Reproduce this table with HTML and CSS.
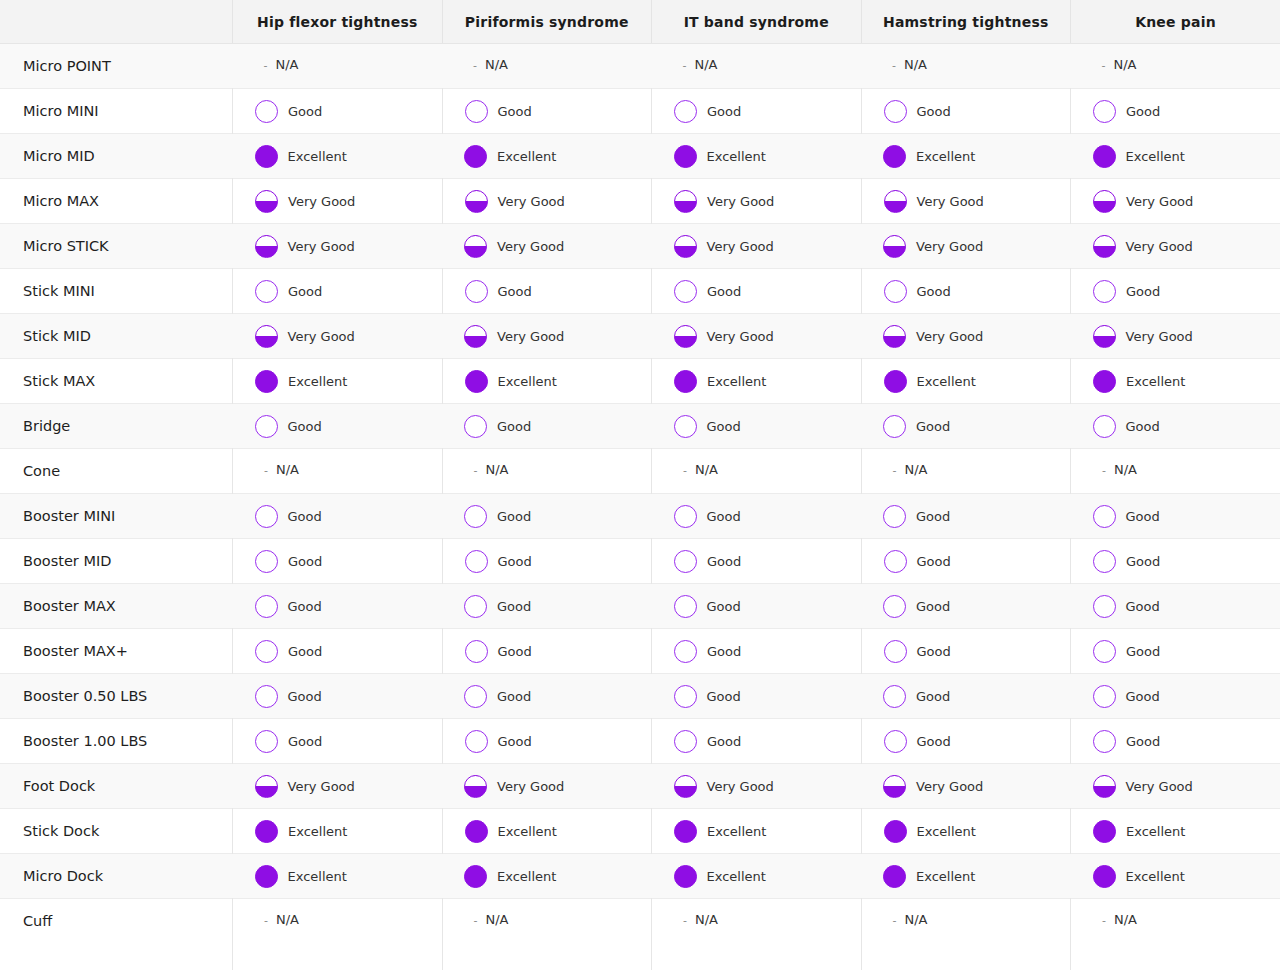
FILE: index.html
```html
<!DOCTYPE html>
<html lang="en">
<head>
    <meta charset="UTF-8">
    <meta name="viewport" content="width=device-width, initial-scale=1.0">
    <title>Product Comparison</title>
    <link rel="stylesheet" href="styles.css">
</head>
<body>
    <table class="compare">
        <thead>
            <tr>
                <th class="corner"></th>
                <th>Hip flexor tightness</th>
                <th>Piriformis syndrome</th>
                <th>IT band syndrome</th>
                <th>Hamstring tightness</th>
                <th>Knee pain</th>
            </tr>
        </thead>
        <tbody id="rows"></tbody>
    </table>

    <script>
        const products = [
            ["Micro POINT", "na"],
            ["Micro MINI", "good"],
            ["Micro MID", "excellent"],
            ["Micro MAX", "very"],
            ["Micro STICK", "very"],
            ["Stick MINI", "good"],
            ["Stick MID", "very"],
            ["Stick MAX", "excellent"],
            ["Bridge", "good"],
            ["Cone", "na"],
            ["Booster MINI", "good"],
            ["Booster MID", "good"],
            ["Booster MAX", "good"],
            ["Booster MAX+", "good"],
            ["Booster 0.50 LBS", "good"],
            ["Booster 1.00 LBS", "good"],
            ["Foot Dock", "very"],
            ["Stick Dock", "excellent"],
            ["Micro Dock", "excellent"],
            ["Cuff", "na"]
        ];

        const labels = { good: "Good", very: "Very Good", excellent: "Excellent" };

        function ratingCell(rating) {
            if (rating === "na") {
                return '<td class="na"><span class="dash">-</span>N/A</td>';
            }
            return '<td><span class="rating"><span class="dot ' + rating + '"></span>' + labels[rating] + '</span></td>';
        }

        const body = document.getElementById("rows");
        products.forEach(([name, rating]) => {
            let html = '<th class="name">' + name + '</th>';
            for (let i = 0; i < 5; i++) {
                html += ratingCell(rating);
            }
            const tr = document.createElement("tr");
            tr.innerHTML = html;
            body.appendChild(tr);
        });
    </script>
</body>
</html>
```

FILE: styles.css
```css
body {
    margin: 0;
    font-family: 'DejaVu Sans', Verdana, sans-serif;
    background-color: #fff;
    color: #222;
}

.compare {
    width: 1280px;
    border-collapse: collapse;
    table-layout: fixed;
}

.compare thead th {
    height: 43px;
    padding: 0;
    background-color: #f3f3f3;
    border-bottom: 1px solid #e6e6e6;
    border-left: 1px solid #e4e4e4;
    font-size: 14px;
    font-weight: bold;
    color: #1c1c1c;
    text-align: center;
    letter-spacing: 0.2px;
}

.compare thead th.corner {
    width: 232px;
    border-left: none;
}

.compare tbody tr {
    border-bottom: 1px solid #ececec;
}

.compare tbody tr:nth-child(odd) {
    background-color: #f9f9f9;
}

.compare tbody tr:nth-child(even) td {
    border-left: 1px solid #e6e6e6;
}

.compare tbody tr:last-child {
    border-bottom: none;
}

.compare tbody tr:last-child th,
.compare tbody tr:last-child td {
    height: 61px;
}

.compare tbody th,
.compare tbody td {
    height: 33px;
    padding: 11px 0 0 22px;
    vertical-align: top;
    line-height: 22px;
    text-align: left;
}

.name {
    font-size: 14.5px;
    font-weight: normal;
    color: #1e1e1e;
    padding-left: 23px !important;
}

.compare tbody td {
    font-size: 13px;
    color: #333;
}

.compare tbody td.na {
    padding-left: 31px;
    line-height: 20px;
}

.dash {
    display: inline-block;
    font-size: 11px;
    color: #888;
    margin-right: 8px;
}

.rating {
    display: flex;
    align-items: center;
    gap: 10px;
}

.dot {
    box-sizing: border-box;
    width: 23px;
    height: 23px;
    border: 1.5px solid #9a2cf0;
    border-radius: 50%;
    flex-shrink: 0;
    background-color: #fff;
}

.dot.excellent {
    background-color: #8f0ee4;
    border-color: #8f0ee4;
}

.dot.very {
    background: linear-gradient(to bottom, #fff 50%, #8f0ee4 50%);
    border-color: #8f0ee4;
}
```
